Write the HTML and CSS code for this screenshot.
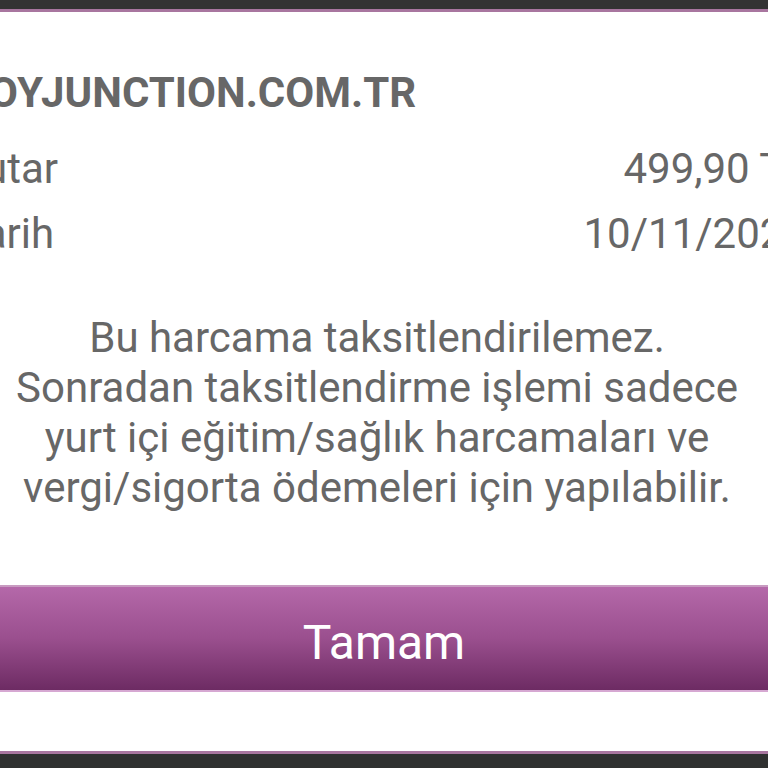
FILE: index.html
```html
<!DOCTYPE html>
<html lang="tr">

<head>
    <meta charset="UTF-8">
    <title>Taksitlendirme</title>
    <link rel="stylesheet" href="styles.css">
</head>

<body>
    <div class="statusbar"></div>
    <div class="dialog">
        <div class="dialog_body">
            <h2 class="merchant">OYJUNCTION.COM.TR</h2>
            <div class="row row_first">
                <span class="label">Tutar</span>
                <span class="value">499,90 TL</span>
            </div>
            <div class="row">
                <span class="label">Tarih</span>
                <span class="value">10/11/2021</span>
            </div>
            <p class="message">
                Bu harcama taksitlendirilemez.<br>
                Sonradan taksitlendirme işlemi sadece<br>
                yurt içi eğitim/sağlık harcamaları ve<br>
                vergi/sigorta ödemeleri için yapılabilir.
            </p>
        </div>
        <div class="btn_ok">Tamam</div>
    </div>
    <div class="navbar"></div>
</body>

</html>
```

FILE: styles.css
```css
* {
    margin: 0;
    padding: 0;
}

body {
    background-color: #333333;
    font-family: Roboto, "Noto Sans", sans-serif;
    color: #676767;
    overflow: hidden;
    height: 768px;
}

.statusbar {
    height: 9px;
    background-color: #333333;
}

/* dialog is wider than the screen, edges are cut */
.dialog {
    background-color: #fff;
    border-top: 3px solid #a8769f;
    border-bottom: 3px solid #a8769f;
    margin: 0 -60px 0 -60px;
    height: 739px;
    display: flex;
    flex-direction: column;
}

.dialog_body {
    padding: 0 21px 0 21px;
}

.merchant {
    font-size: 42px;
    font-weight: bold;
    line-height: 48px;
    margin-top: 57px;
    padding-left: 28px;
}

.row {
    display: flex;
    justify-content: space-between;
    font-size: 42px;
    line-height: 65px;
}

.row_first {
    margin-top: 19px;
}

.message {
    font-size: 42px;
    line-height: 50px;
    text-align: center;
    margin-top: 47px;
    padding-right: 14px;
}

.btn_ok {
    margin-top: 72px;
    border-top: 2px solid #c89bc1;
    border-bottom: 2px solid #d6a8d2;
    background: linear-gradient(#b468a9, #9a4f8e 50%, #6d2b63);
    color: #fff;
    font-size: 48px;
    display: flex;
    align-items: center;
    justify-content: center;
    padding-top: 8px;
    box-sizing: border-box;
    height: 107px;
}

.navbar {
    height: 14px;
    background-color: #2f3130;
}
```
